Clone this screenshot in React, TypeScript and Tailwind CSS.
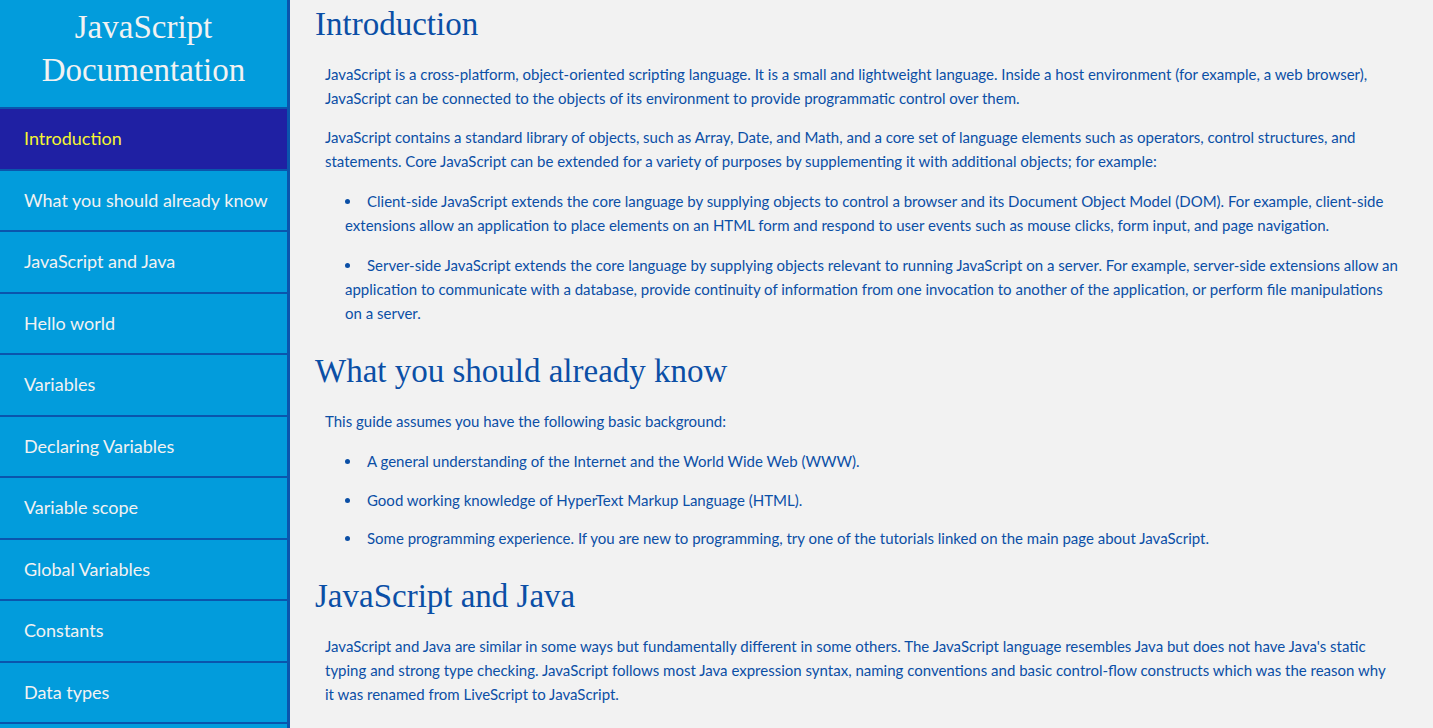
import React from 'react';

const navItems = [
	'Introduction',
	'What you should already know',
	'JavaScript and Java',
	'Hello world',
	'Variables',
	'Declaring Variables',
	'Variable scope',
	'Global Variables',
	'Constants',
	'Data types',
];

const serif = { fontFamily: '"Liberation Serif", "DejaVu Serif", serif' };

const Section = ({ title, children }: { title: string; children: React.ReactNode }) => (
	<section className="mb-[26px]">
		<h2 className="text-[33px] leading-[40px] pl-[25px]" style={serif}>
			{title}
		</h2>
		<div className="mt-[18px] pl-[35px] pr-[8px] flex flex-col gap-[15px]">{children}</div>
	</section>
);

const Bullets = ({ items, gap }: { items: React.ReactNode[]; gap: string }) => (
	<ul className={'list-disc list-inside pl-[20px] flex flex-col mt-[1px] ' + gap}>
		{items.map((t, i) => (
			<li key={i}>
				<span className="pl-[1px]">{t}</span>
			</li>
		))}
	</ul>
);

export default function App() {
	return (
		<div
			className="flex h-[728px] overflow-hidden bg-[#f2f2f2] text-[#0b4fa6]"
			style={{ fontFamily: 'Lato, "Noto Sans", sans-serif' }}
		>
			<nav className="w-[290px] shrink-0 bg-[#029cdc] border-r-[3px] border-[#0a55ad] overflow-hidden">
				<header
					className="h-[107px] box-content border-b-2 border-[#0a55ad] text-center text-[#f2f2f2] text-[33px] leading-[43px]"
					style={serif}
				>
					<div className="pt-[6px]">
						JavaScript
						<br />
						Documentation
					</div>
				</header>
				{navItems.map((item, i) => (
					<div
						key={item}
						className={
							i === 0
								? 'h-[59.5px] box-content border-b-2 border-[#0a55ad] flex items-center pl-[24px] text-[18px] bg-[#1f20a3] text-[#f5f531]'
								: 'h-[59.5px] box-content border-b-2 border-[#0a55ad] flex items-center pl-[24px] text-[18px] text-[#f2f2f2]'
						}
					>
						{item}
					</div>
				))}
			</nav>
			<main className="flex-1 pt-[4px] text-[15px] leading-[24px] overflow-hidden">
				<Section title="Introduction">
					<p>
						JavaScript is a cross-platform, object-oriented scripting language. It is a small and lightweight
						language. Inside a host environment (for example, a web browser),
						<br />
						JavaScript can be connected to the objects of its environment to provide programmatic control over
						them.
					</p>
					<p>
						JavaScript contains a standard library of objects, such as Array, Date, and Math, and a core set of
						language elements such as operators, control structures, and
						<br />
						statements. Core JavaScript can be extended for a variety of purposes by supplementing it with
						additional objects; for example:
					</p>
					<Bullets
						gap="gap-[16px]"
						items={[
							<>
								Client-side JavaScript extends the core language by supplying objects to control a browser and its
								Document Object Model (DOM). For example, client-side
								<br />
								extensions allow an application to place elements on an HTML form and respond to user events such
								as mouse clicks, form input, and page navigation.
							</>,
							<>
								Server-side JavaScript extends the core language by supplying objects relevant to running
								JavaScript on a server. For example, server-side extensions allow an
								<br />
								application to communicate with a database, provide continuity of information from one invocation
								to another of the application, or perform file manipulations
								<br />
								on a server.
							</>,
						]}
					/>
				</Section>
				<Section title="What you should already know">
					<p>This guide assumes you have the following basic background:</p>
					<Bullets
						gap="gap-[14.5px]"
						items={[
							'A general understanding of the Internet and the World Wide Web (WWW).',
							'Good working knowledge of HyperText Markup Language (HTML).',
							'Some programming experience. If you are new to programming, try one of the tutorials linked on the main page about JavaScript.',
						]}
					/>
				</Section>
				<Section title="JavaScript and Java">
					<p>
						JavaScript and Java are similar in some ways but fundamentally different in some others. The
						JavaScript language resembles Java but does not have Java's static
						<br />
						typing and strong type checking. JavaScript follows most Java expression syntax, naming conventions
						and basic control-flow constructs which was the reason why
						<br />
						it was renamed from LiveScript to JavaScript.
					</p>
				</Section>
			</main>
		</div>
	);
}
